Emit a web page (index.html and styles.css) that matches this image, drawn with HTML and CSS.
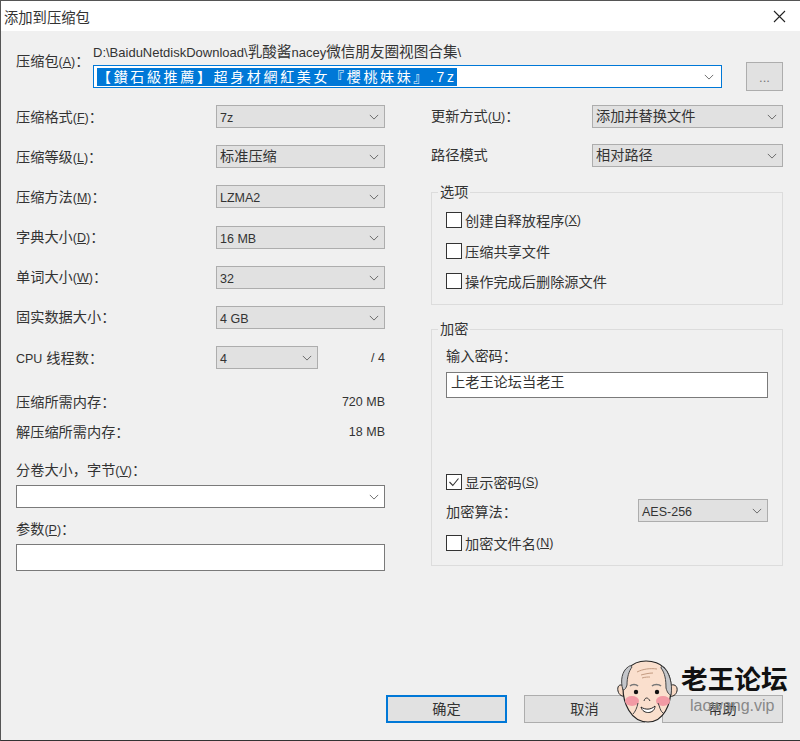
FILE: index.html
```html
<!DOCTYPE html>
<html lang="zh-CN">
<head>
    <meta charset="UTF-8">
    <title>添加到压缩包</title>
    <link rel="stylesheet" href="styles.css">
</head>
<body>

<div class="window">
    <div class="titlebar">
        <span class="title">添加到压缩包</span>
        <svg class="close" width="13" height="13" viewBox="0 0 13 13"><path d="M1 1 L12 12 M12 1 L1 12" stroke="#222" stroke-width="1.1" fill="none"/></svg>
    </div>

    <div class="content">
        <div class="archive">
            <span class="archive-label">压缩包<span class="key">(<u>A</u>)</span>：</span>
            <div class="archive-path">
                <div class="path-text">D:\BaiduNetdiskDownload\<span class="cjk">乳酸酱</span>nacey<span class="cjk">微信朋友圈视图合集</span>\</div>
                <div class="combo focus">
                    <span class="selected">【鑚石級推薦】超身材網紅美女『櫻桃妹妹』.7z</span>
                    <svg class="arrow" width="10" height="6" viewBox="0 0 12 7"><path d="M1 1 L6 6 L11 1" stroke="#555" fill="none"/></svg>
                </div>
            </div>
            <div class="browse">...</div>
        </div>

        <div class="columns">
            <div class="left">
                <div class="row"><span>压缩格式<span class="key">(<u>F</u>)</span>：</span><div class="select latin">7z<svg class="arrow" width="10" height="6" viewBox="0 0 12 7"><path d="M1 1 L6 6 L11 1" stroke="#555" fill="none"/></svg></div></div>
                <div class="row"><span>压缩等级<span class="key">(<u>L</u>)</span>：</span><div class="select">标准压缩<svg class="arrow" width="10" height="6" viewBox="0 0 12 7"><path d="M1 1 L6 6 L11 1" stroke="#555" fill="none"/></svg></div></div>
                <div class="row"><span>压缩方法<span class="key">(<u>M</u>)</span>：</span><div class="select latin">LZMA2<svg class="arrow" width="10" height="6" viewBox="0 0 12 7"><path d="M1 1 L6 6 L11 1" stroke="#555" fill="none"/></svg></div></div>
                <div class="row"><span>字典大小<span class="key">(<u>D</u>)</span>：</span><div class="select latin">16 MB<svg class="arrow" width="10" height="6" viewBox="0 0 12 7"><path d="M1 1 L6 6 L11 1" stroke="#555" fill="none"/></svg></div></div>
                <div class="row"><span>单词大小<span class="key">(<u>W</u>)</span>：</span><div class="select latin">32<svg class="arrow" width="10" height="6" viewBox="0 0 12 7"><path d="M1 1 L6 6 L11 1" stroke="#555" fill="none"/></svg></div></div>
                <div class="row"><span>固实数据大小：</span><div class="select latin">4 GB<svg class="arrow" width="10" height="6" viewBox="0 0 12 7"><path d="M1 1 L6 6 L11 1" stroke="#555" fill="none"/></svg></div></div>
                <div class="row"><span><span class="key">CPU</span> 线程数：</span><div class="select latin short">4<svg class="arrow" width="10" height="6" viewBox="0 0 12 7"><path d="M1 1 L6 6 L11 1" stroke="#555" fill="none"/></svg></div><span class="value">/ 4</span></div>
                <div class="mem first"><span>压缩所需内存：</span><span class="value">720 MB</span></div>
                <div class="mem"><span>解压缩所需内存：</span><span class="value">18 MB</span></div>
                <div class="field-label volume">分卷大小，字节<span class="key">(<u>V</u>)</span>：</div>
                <div class="wide-combo"><svg class="arrow" width="10" height="6" viewBox="0 0 12 7"><path d="M1 1 L6 6 L11 1" stroke="#555" fill="none"/></svg></div>
                <div class="field-label params">参数<span class="key">(<u>P</u>)</span>：</div>
                <div class="text-input tall"></div>
            </div>

            <div class="right">
                <div class="row-r"><span>更新方式<span class="key">(<u>U</u>)</span>：</span><div class="select right-select">添加并替换文件<svg class="arrow" width="10" height="6" viewBox="0 0 12 7"><path d="M1 1 L6 6 L11 1" stroke="#555" fill="none"/></svg></div></div>
                <div class="row-r second"><span>路径模式</span><div class="select right-select">相对路径<svg class="arrow" width="10" height="6" viewBox="0 0 12 7"><path d="M1 1 L6 6 L11 1" stroke="#555" fill="none"/></svg></div></div>

                <fieldset class="group options">
                    <legend>选项</legend>
                    <div class="check"><i class="box"></i>创建自释放程序<span class="key">(<u>X</u>)</span></div>
                    <div class="check"><i class="box"></i>压缩共享文件</div>
                    <div class="check"><i class="box"></i>操作完成后删除源文件</div>
                </fieldset>

                <fieldset class="group encrypt">
                    <legend>加密</legend>
                    <div class="pw-label">输入密码：</div>
                    <div class="text-input pw">上老王论坛当老王</div>
                    <div class="check show-pw"><i class="box"><svg width="14" height="14" viewBox="0 0 14 14"><path d="M2.5 7 L5.8 10.5 L11.5 3.5" stroke="#333" stroke-width="1.1" fill="none"/></svg></i>显示密码<span class="key">(<u>S</u>)</span></div>
                    <div class="algo"><span>加密算法：</span><div class="select latin algo-select">AES-256<svg class="arrow" width="10" height="6" viewBox="0 0 12 7"><path d="M1 1 L6 6 L11 1" stroke="#555" fill="none"/></svg></div></div>
                    <div class="check"><i class="box"></i>加密文件名<span class="key">(<u>N</u>)</span></div>
                </fieldset>
            </div>
        </div>

        <div class="buttons">
            <div class="btn primary">确定</div>
            <div class="btn">取消</div>
            <div class="btn">帮助</div>
        </div>
    </div>

    <div class="watermark">
        <svg class="mascot" width="62" height="63" viewBox="0 0 62 63">
            <path d="M7 26 C2 23 0 27 1 31 C2 35 5 37 9 36 Z" fill="#f8d9c4" stroke="#222" stroke-width="1"/>
            <path d="M52 26 C57 23 61 26 60 31 C59 35 56 37 52 36 Z" fill="#f8d9c4" stroke="#222" stroke-width="1"/>
            <path d="M29 1 C14 1 5 12 6 28 C6 42 13 62 31 62 C47 62 54 44 54 28 C54 10 44 1 29 1 Z" fill="#fadfcd" stroke="#222" stroke-width="1.2"/>
            <path d="M11 7 C5 11 3 21 6 30 C8 30 9 28 10 25 C10 17 12 11 15 7 C14 5 12 6 11 7 Z" fill="#c4c6ca" stroke="#444" stroke-width="1"/>
            <path d="M46 7 C52 11 56 24 54 35 C52 35 50 32 49 28 C49 20 48 13 44 8 C44 6 45 6 46 7 Z" fill="#c4c6ca" stroke="#444" stroke-width="1"/>
            <path d="M20 12 C26 9 33 8 40 9 M24 15 C28 14 32 13 36 13 M25 18 C28 17 31 17 33 17" stroke="#c49c82" fill="none"/>
            <path d="M13 26 C15 24 19 24 21 26 M35 26 C37 24 42 24 44 26" stroke="#777" stroke-width="1.6" fill="none"/>
            <circle cx="19" cy="32" r="2.2" fill="#111"/>
            <circle cx="40" cy="32" r="2.2" fill="#111"/>
            <ellipse cx="15" cy="41" rx="7" ry="5" fill="#f29aa4"/>
            <ellipse cx="46" cy="41" rx="7" ry="5" fill="#f29aa4"/>
            <path d="M27 41 C28 37 31 37 33 41" stroke="#333" fill="none"/>
            <path d="M24 47 C28 50 34 50 38 46 C38 54 26 55 24 47 Z" fill="#fff" stroke="#222"/>
            <path d="M21 43 C20 48 18 52 16 54 M41 43 C43 47 43 51 46 53" stroke="#444" fill="none"/>
        </svg>
        <div class="mark-text">
            <div class="mark-title">老王论坛</div>
            <div class="mark-url">laowang.vip</div>
        </div>
    </div>
</div>

</body>
</html>
```

FILE: styles.css
```css
* {
    box-sizing: border-box;
}
body {
    margin: 0;
    font-family: "Liberation Sans", "Noto Sans CJK SC", sans-serif;
    font-size: 14.2px;
    color: #333;
    background: #f0f0f0;
}
u {
    text-underline-offset: 1px;
}
.key {
    font-size: 12.5px;
}
.cjk {
    font-size: 14.6px;
}
.window {
    position: relative;
    display: flex;
    flex-direction: column;
    width: 800px;
    height: 741px;
    background: #f0f0f0;
    border-top: 1px solid #555;
    border-left: 1px solid #555;
    border-bottom: 1px solid #333;
    overflow: hidden;
}
.titlebar {
    height: 30px;
    flex-shrink: 0;
    background: #fff;
    display: flex;
    justify-content: space-between;
    align-items: center;
    padding: 0 14px 0 3px;
    font-size: 14.3px;
}
.content {
    flex: 1;
    display: flex;
    flex-direction: column;
    padding: 13px 17px 17px 15px;
}
.archive {
    display: flex;
    height: 48px;
}
.archive-label {
    width: 77px;
    padding-top: 6px;
}
.archive-path {
    width: 629px;
}
.path-text {
    font-size: 13px;
    line-height: 17px;
    height: 21px;
}
.combo {
    height: 23px;
    background: #fff;
    border: 1px solid #0078d7;
    display: flex;
    align-items: center;
    justify-content: space-between;
    padding: 0 7px 0 3px;
}
.selected {
    background: #0078d7;
    color: #fff;
    font-size: 14px;
    letter-spacing: 2.65px;
    line-height: 18px;
}
.browse {
    width: 37px;
    height: 29px;
    margin: 18px 0 0 24px;
    background: #e1e1e1;
    border: 1px solid #adadad;
    text-align: center;
    font-size: 13px;
    line-height: 30px;
    color: #777;
}
.columns {
    display: flex;
    margin-top: 13px;
}
.left {
    width: 369px;
}
.right {
    width: 352px;
    margin-left: 46px;
}
.row {
    display: flex;
    align-items: center;
    height: 23px;
    margin-bottom: 17.2px;
}
.row > span:first-child {
    width: 200px;
    padding-bottom: 2px;
}
.select {
    position: relative;
    width: 169px;
    height: 23px;
    background: #e1e1e1;
    border: 1px solid #adadad;
    padding-left: 3px;
    line-height: 21px;
}
.select.latin {
    font-size: 12.5px;
    line-height: 24px;
}
.select .arrow {
    position: absolute;
    right: 5px;
    top: 8px;
}
.select.short {
    width: 102px;
}
.value {
    margin-left: auto;
    font-size: 12.5px;
}
.mem {
    display: flex;
    justify-content: space-between;
    height: 17px;
    line-height: 17px;
    margin-bottom: 13px;
}
.mem.first {
    margin-top: 25px;
}
.field-label {
    height: 17px;
    line-height: 17px;
}
.volume {
    margin-top: 21px;
}
.params {
    margin-top: 13px;
}
.wide-combo {
    position: relative;
    height: 23px;
    margin-top: 6px;
    background: #fff;
    border: 1px solid #7a7a7a;
}
.wide-combo .arrow {
    position: absolute;
    right: 5px;
    top: 8px;
}
.text-input {
    background: #fff;
    border: 1px solid #7a7a7a;
}
.tall {
    height: 27px;
    margin-top: 6px;
}
.row-r {
    display: flex;
    align-items: center;
    height: 23px;
}
.row-r.second {
    margin-top: 16px;
}
.row-r > span {
    width: 161px;
    padding-bottom: 4px;
}
.select.right-select {
    width: 191px;
}
.group {
    margin: 0;
    padding: 0 14px;
    border: 1px solid #dcdcdc;
    min-width: 0;
}
.group legend {
    padding: 0 2px;
    margin-left: -8px;
    line-height: 17px;
}
.options {
    margin-top: 17px;
    height: 121px;
}
.encrypt {
    margin-top: 16px;
    height: 245px;
}
.check {
    display: flex;
    align-items: center;
    height: 16px;
    margin-top: 14.5px;
}
.options .check:first-of-type {
    margin-top: 11px;
}
.box {
    display: block;
    width: 16px;
    height: 16px;
    margin-right: 3px;
    background: #fff;
    border: 1px solid #333;
}
.box svg {
    display: block;
}
.pw-label {
    margin-top: 10px;
    line-height: 17px;
}
.pw {
    width: 322px;
    height: 26px;
    margin-top: 7px;
    padding-left: 4px;
    line-height: 18px;
}
.check.show-pw {
    margin-top: 76px;
}
.algo {
    display: flex;
    align-items: center;
    justify-content: space-between;
    width: 322px;
    height: 23px;
    margin-top: 9px;
}
.select.algo-select {
    width: 130px;
}
.algo + .check {
    margin-top: 13px;
}
.buttons {
    display: flex;
    justify-content: flex-end;
    gap: 17px;
    margin-top: auto;
}
.btn {
    width: 121px;
    height: 28px;
    background: #e1e1e1;
    border: 1px solid #adadad;
    text-align: center;
    line-height: 26px;
}
.btn.primary {
    border: 2px solid #0078d7;
    line-height: 24px;
}
.watermark {
    position: absolute;
    left: 616px;
    top: 659px;
    display: flex;
    gap: 2px;
}
.mark-title {
    font-size: 26.7px;
    font-weight: 700;
    color: #111;
    line-height: 32px;
    margin-top: 4px;
}
.mark-url {
    font-size: 16px;
    color: #888;
    line-height: 20px;
    padding-left: 9px;
}
```
